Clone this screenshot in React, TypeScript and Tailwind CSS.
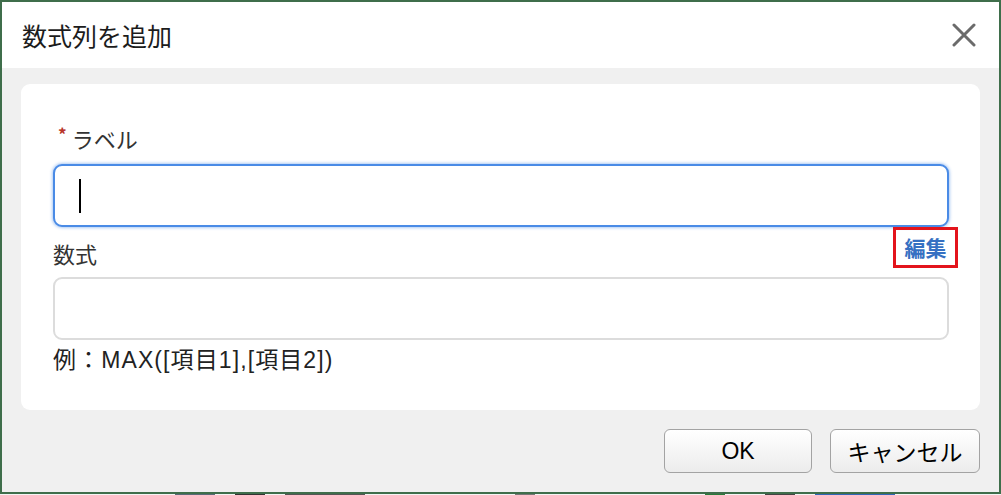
const jp = {fontFamily: '"Noto Sans CJK JP", "Liberation Sans", sans-serif'};
const mixed = {fontFamily: '"Liberation Sans", "Noto Sans CJK JP", sans-serif'};

const CloseIcon = () => (
	<svg width="24" height="24" viewBox="0 0 24 24" className="block">
		<path d="M2 2 L22 22 M22 2 L2 22" stroke="#6b6b6b" strokeWidth="3" strokeLinecap="round" />
	</svg>
);

const Field = ({focused}: {focused?: boolean}) => (
	<div
		className={
			focused
				? 'flex h-[63px] items-center rounded-[9px] border-2 border-[#4a8be6] bg-white pl-[24px] shadow-[0_0_3px_1px_rgba(74,139,230,0.45)]'
				: 'h-[63px] rounded-[9px] border-2 border-[#dcdcdc] bg-white'
		}
	>
		{focused && <div className="h-[34px] w-[2px] bg-black" />}
	</div>
);

export default function App() {
	return (
		<div className="flex h-[495px] w-[1001px] flex-col overflow-hidden bg-white" style={jp}>
			<div className="flex h-[494px] flex-col border-2 border-[#3f6e4b]">
				{/* header */}
				<div className="flex h-[66px] shrink-0 items-center justify-between bg-white pl-[20px] pr-[23px]">
					<h1 className="text-[25px] leading-none text-[#1c1c1c]">数式列を追加</h1>
					<CloseIcon />
				</div>

				{/* body */}
				<div className="flex flex-1 flex-col bg-[#f0f0f0] px-[19px] pt-[16px]">
					<div className="flex h-[326px] flex-col rounded-[9px] bg-white pl-[32px] pr-[31px] pt-[40px]">
						<div className="flex h-[28px] items-center text-[22px] leading-[28px] text-[#333]">
							<span className="ml-[5px] mr-[5px] self-start pt-[3px] text-[17px] font-bold leading-[14px] text-[#b8352a]">*</span>
							<span>ラベル</span>
						</div>
						<div className="mt-[12px]">
							<Field focused />
						</div>

						<div className="flex h-[50px] items-start justify-between">
							<span className="mt-[12px] text-[22px] leading-[28px] text-[#333]">数式</span>
							<span className="-mr-[9px] flex h-[41px] w-[65px] items-center justify-center border-[3px] border-[#e3141c] text-[21px] font-bold leading-none text-[#3570c2]">
								編集
							</span>
						</div>
						<Field />

						<p className="mt-[6px] text-[23px] leading-[28px] tracking-[1.1px] text-[#222]" style={mixed}>
							例：MAX([項目1],[項目2])
						</p>
					</div>

					<div className="mt-[19px] flex justify-end gap-[18px]">
						<button className="h-[44px] w-[148px] rounded-[6px] border border-[#a3a3a3] bg-gradient-to-b from-white to-[#ececec] text-[23px] text-black" style={mixed}>
							OK
						</button>
						<button className="h-[44px] w-[150px] rounded-[6px] border border-[#a3a3a3] bg-gradient-to-b from-white to-[#ececec] text-[23px] text-black">
							キャンセル
						</button>
					</div>
				</div>
			</div>

			{/* page behind the dialog peeking out */}
			<div className="flex h-[1px] items-stretch bg-[#f4f4f4]">
				<div className="ml-[175px] w-[40px] bg-[#5a6a78]" />
				<div className="ml-[20px] w-[30px] bg-[#333]" />
				<div className="ml-[20px] w-[80px] bg-[#555]" />
				<div className="ml-[150px] w-[20px] bg-[#777]" />
				<div className="ml-[170px] w-[20px] bg-[#2a7a3a]" />
				<div className="ml-[40px] w-[30px] bg-[#444]" />
				<div className="ml-[20px] w-[80px] bg-[#3266b8]" />
			</div>
		</div>
	);
}
